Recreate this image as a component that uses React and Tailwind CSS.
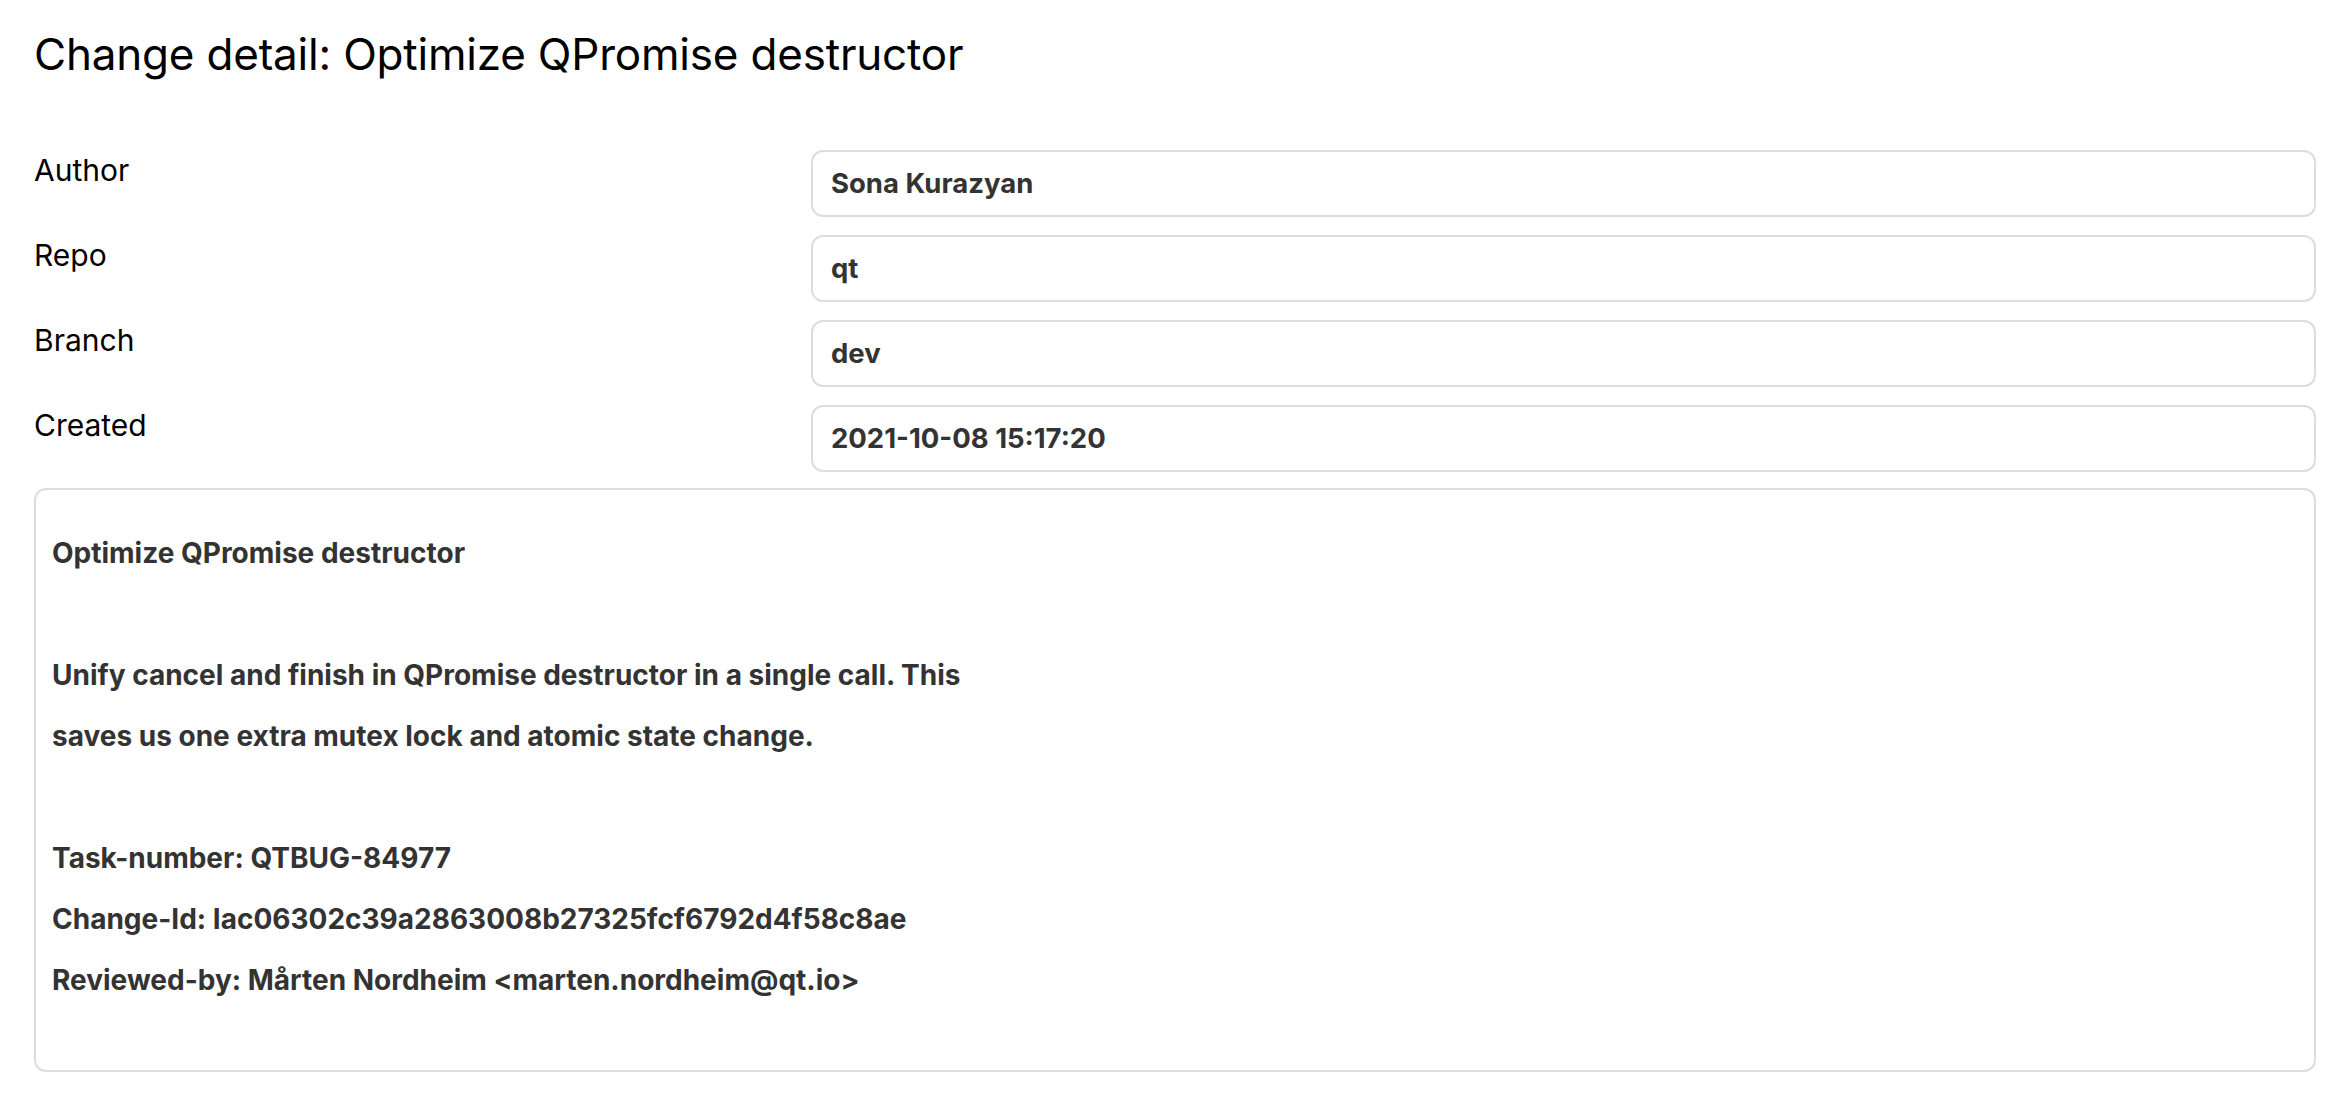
const FIELDS = [
  { label: "Author", value: "Sona Kurazyan" },
  { label: "Repo", value: "qt" },
  { label: "Branch", value: "dev" },
  { label: "Created", value: "2021-10-08 15:17:20" },
];

const MESSAGE = [
  "Optimize QPromise destructor",
  "",
  "Unify cancel and finish in QPromise destructor in a single call. This",
  "saves us one extra mutex lock and atomic state change.",
  "",
  "Task-number: QTBUG-84977",
  "Change-Id: Iac06302c39a2863008b27325fcf6792d4f58c8ae",
  "Reviewed-by: Mårten Nordheim <marten.nordheim@qt.io>",
  "",
];

export default function App() {
  return (
    <div className="min-h-screen bg-white pl-[34px] pr-[30px] pt-[28px] font-['Inter',sans-serif] text-black">
      <h1 className="text-[44px] leading-[52px] font-normal tracking-[-0.2px]">
        Change detail: Optimize QPromise destructor
      </h1>

      <div className="mt-[70px] flex flex-col gap-[18px]">
        {FIELDS.map(f => (
          <div key={f.label} className="grid grid-cols-[777px_1fr]">
            <div className="text-[30px] leading-[40px]">{f.label}</div>
            <div className="h-[67px] flex items-center px-[18px] border-2 border-[#dddddd] rounded-[12px] text-[27.5px] font-bold text-[#333333]">
              {f.value}
            </div>
          </div>
        ))}
      </div>

      {/* Commit message */}
      <div className="mt-[16px] h-[584px] border-2 border-[#dddddd] rounded-[12px] px-[16px] pt-[33px] text-[28px] font-bold text-[#333333]">
        {MESSAGE.map((line, i) => (
          <div key={i} className="h-[61px] leading-[61px]">{line}</div>
        ))}
      </div>
    </div>
  );
}
